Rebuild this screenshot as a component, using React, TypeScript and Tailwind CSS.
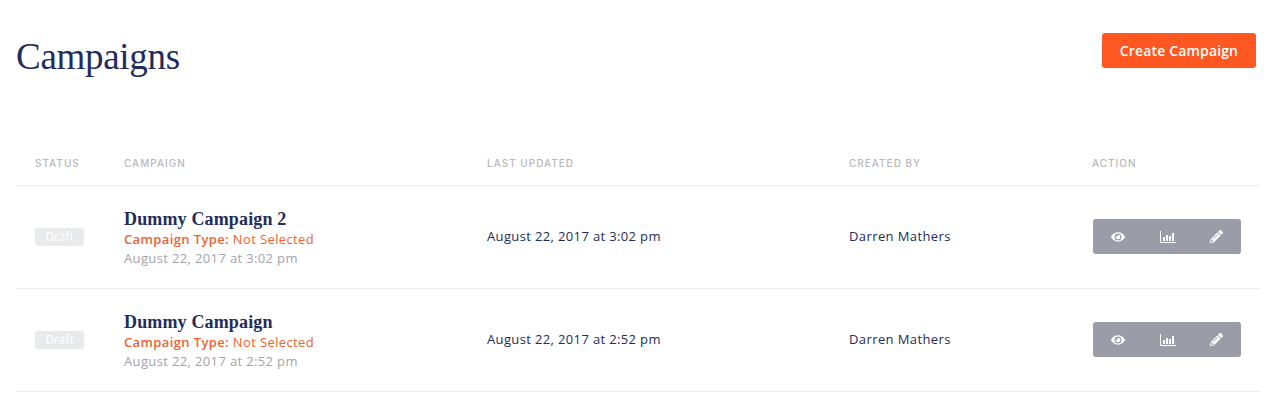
import { FaEye, FaPencilAlt } from "react-icons/fa";

const campaigns = [
  { name: "Dummy Campaign 2", date: "August 22, 2017 at 3:02 pm" },
  { name: "Dummy Campaign", date: "August 22, 2017 at 2:52 pm" },
];

const cols = "grid grid-cols-[108px_363px_362px_243px_168px]";

function BarChart() {
  return (
    <svg width="16" height="12" viewBox="0 0 16 12" fill="currentColor">
      <rect x="0" y="0" width="1" height="12" />
      <rect x="0" y="11" width="16" height="1" />
      <rect x="3" y="6" width="2" height="4" />
      <rect x="6" y="4" width="2" height="6" />
      <rect x="9" y="5" width="2" height="5" />
      <rect x="12" y="2" width="2" height="8" />
    </svg>
  );
}

export default function App() {
  return (
    <div className="h-[414px] w-[1280px] overflow-hidden bg-white pl-4 pr-5 font-['Open_Sans',sans-serif] text-[#232c5c]">
      {/* Page header */}
      <div className="flex h-[112px] items-start justify-between pr-1 pt-[33px]">
        <h1 className="font-['Liberation_Serif',serif] text-[37px] leading-[48px] tracking-[-0.3px] text-[#232c5c]">Campaigns</h1>
        <button className="h-[35px] w-[154px] rounded-[3px] bg-[#ff5722] text-sm font-semibold tracking-[0.15px] text-white">
          Create Campaign
        </button>
      </div>

      {/* Table */}
      <div className={`${cols} h-[74px] items-end border-b border-[#ececec] pb-[15px] font-['Inter',sans-serif] text-[10px] font-medium uppercase leading-[14px] tracking-[1px] text-[#b8b8b8]`}>
        <div className="pl-[19px]">Status</div>
        <div>Campaign</div>
        <div>Last Updated</div>
        <div>Created By</div>
        <div>Action</div>
      </div>

      {campaigns.map((c) => (
        <div key={c.name} className={`${cols} h-[103px] items-center border-b border-[#ececec] text-[13px]`}>
          <div className="pl-[19px]">
            <span className="flex h-[18px] w-[49px] items-center justify-center rounded-[3px] bg-[#e9eaeb] text-xs leading-none text-white">
              Draft
            </span>
          </div>
          <div className="pt-[3px] leading-[19.5px]">
            <div className="font-['Liberation_Serif',serif] text-[18px] font-bold leading-[20px] tracking-[0.15px]">{c.name}</div>
            <div className="mt-[1px] text-[13px] tracking-[0.38px] text-[#f0622f]">
              <span className="font-semibold">Campaign Type:</span> Not Selected
            </div>
            <div className="tracking-[0.36px] text-[#a3a4aa]">{c.date}</div>
          </div>
          <div className="tracking-[0.36px]">{c.date}</div>
          <div className="tracking-[0.4px]">Darren Mathers</div>
          <div>
            <div className="mb-[1px] ml-[1px] flex h-[35px] w-[148px] items-center rounded-[3px] bg-[#9a9ca8] pl-[18px] text-white">
              <FaEye size={14} />
              <span className="ml-[35px]"><BarChart /></span>
              <span className="ml-[34px]"><FaPencilAlt size={13} /></span>
            </div>
          </div>
        </div>
      ))}
    </div>
  );
}
